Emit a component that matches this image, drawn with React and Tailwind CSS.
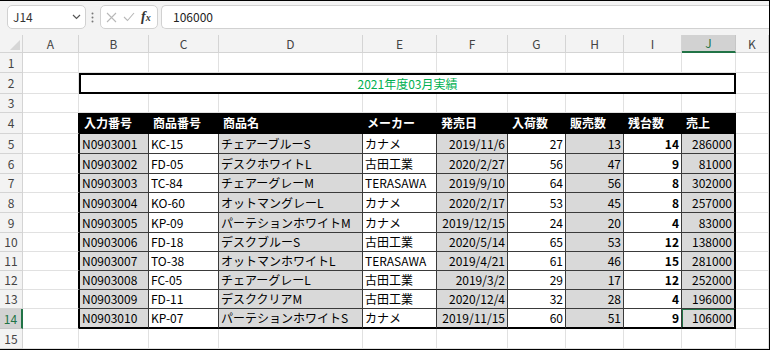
import React from "react";

const colKeys = ["A", "B", "C", "D", "E", "F", "G", "H", "I", "J", "K"];
const colW = ["w-[56px]", "w-[70px]", "w-[70px]", "w-[144px]", "w-[74px]", "w-[71px]", "w-[58px]", "w-[58px]", "w-[58px]", "w-[54px]", "w-[33px]"];
const rowH = ["h-[20px]", "h-[21px]", "h-[19px]", "h-[21px]", "h-[20px]", "h-[20px]", "h-[19px]", "h-[20px]", "h-[20px]", "h-[19px]", "h-[19px]", "h-[19px]", "h-[19px]", "h-[20px]", "h-[20px]"];

const heads = ["入力番号", "商品番号", "商品名", "メーカー", "発売日", "入荷数", "販売数", "残台数", "売上"];

const rows = [
  ["N0903001", "KC-15", "チェアーブルーS", "カナメ", "2019/11/6", "27", "13", "14", "286000"],
  ["N0903002", "FD-05", "デスクホワイトL", "古田工業", "2020/2/27", "56", "47", "9", "81000"],
  ["N0903003", "TC-84", "チェアーグレーM", "TERASAWA", "2019/9/10", "64", "56", "8", "302000"],
  ["N0903004", "KO-60", "オットマングレーL", "カナメ", "2020/2/17", "53", "45", "8", "257000"],
  ["N0903005", "KP-09", "パーテションホワイトM", "カナメ", "2019/12/15", "24", "20", "4", "83000"],
  ["N0903006", "FD-18", "デスクブルーS", "古田工業", "2020/5/14", "65", "53", "12", "138000"],
  ["N0903007", "TO-38", "オットマンホワイトL", "TERASAWA", "2019/4/21", "61", "46", "15", "281000"],
  ["N0903008", "FC-05", "チェアーグレーL", "古田工業", "2019/3/2", "29", "17", "12", "252000"],
  ["N0903009", "FD-11", "デスククリアM", "古田工業", "2020/12/4", "32", "28", "4", "196000"],
  ["N0903010", "KP-07", "パーテションホワイトS", "カナメ", "2019/11/15", "60", "51", "9", "106000"],
];

// B..J fills
const fills = ["bg-[#d9d9d9]", "bg-white", "bg-[#d9d9d9]", "bg-white", "bg-[#d9d9d9]", "bg-white", "bg-[#d9d9d9]", "bg-white", "bg-[#d9d9d9]"];

function RowHead({ n, active }) {
  return (
    <div
      className={
        "w-[23px] shrink-0 h-full flex items-center justify-center border-b " +
        (active
          ? "bg-[#d2d2d2] text-[#217346] border-r-2 border-r-[#217346] border-b-[#c6c6c6]"
          : "bg-[#f3f3f3] text-[#444] border-r border-[#d4d4d4]")
      }
    >
      {n}
    </div>
  );
}

function Blank({ i, extra = "" }) {
  return <div className={colW[i] + " shrink-0 h-full border-r border-b border-[#e1e1e1] bg-white " + extra} />;
}

function FormulaBar() {
  return (
    <div className="h-[34px] bg-[#f3f3f3] flex items-start pt-[4px]">
      <div className="ml-[7px] w-[79px] h-[24px] bg-white border border-[#d1d1d1] rounded-[5px] flex items-center pl-[5px] pr-[4px] text-[#333]">
        <span className="flex-1">J14</span>
        <svg width="9" height="6" viewBox="0 0 9 6">
          <path d="M1 1 L4.5 4.5 L8 1" fill="none" stroke="#555" strokeWidth="1.2" />
        </svg>
      </div>
      <svg className="ml-[5px] mt-[7px]" width="3" height="11" viewBox="0 0 3 11">
        <circle cx="1.5" cy="1.5" r="1" fill="#777" />
        <circle cx="1.5" cy="5.5" r="1" fill="#777" />
        <circle cx="1.5" cy="9.5" r="1" fill="#777" />
      </svg>
      <div className="ml-[6px] w-[58px] h-[24px] bg-white border border-[#d1d1d1] rounded-[5px] flex items-center pl-[5px] gap-[6px]">
        <svg width="11" height="11" viewBox="0 0 11 11">
          <path d="M1 1 L10 10 M10 1 L1 10" stroke="#b8b8b8" strokeWidth="1.1" />
        </svg>
        <svg width="12" height="10" viewBox="0 0 12 10">
          <path d="M1 5 L4.5 8.5 L11 1" fill="none" stroke="#b8b8b8" strokeWidth="1.1" />
        </svg>
        <span className="font-['Liberation_Serif',serif] italic font-bold text-[14px] text-[#333] leading-none">
          f<span className="text-[10px]">x</span>
        </span>
      </div>
      <div className="ml-[3px] flex-1 h-[24px] bg-white border border-[#d1d1d1] rounded-l-[5px] border-r-0 flex items-center pl-[11px] text-[#222]">
        106000
      </div>
    </div>
  );
}

function ColHeader() {
  return (
    <div className="h-[18px] flex bg-[#f3f3f3] text-[#444]">
      <div className="w-[23px] shrink-0 h-full border-r border-b border-[#d4d4d4] relative">
        <svg className="absolute right-[2px] bottom-[2px]" width="10" height="10" viewBox="0 0 10 10">
          <path d="M10 0 L10 10 L0 10 Z" fill="#d6d6d6" />
        </svg>
      </div>
      {colKeys.map((k, i) =>
        k === "J" ? (
          <div key={k} className={colW[i] + " shrink-0 h-full flex items-center justify-center bg-[#d2d2d2] text-[#217346] border-r border-[#c6c6c6] border-b-2 border-b-[#217346]"}>
            {k}
          </div>
        ) : (
          <div key={k} className={colW[i] + " shrink-0 h-full flex items-center justify-center border-r border-b border-[#d4d4d4]"}>
            {k}
          </div>
        )
      )}
    </div>
  );
}

function TableRow({ cells, head, last, active }) {
  return cells.map((c, j) => {
    const i = j + 1;
    let cls = colW[i] + " shrink-0 h-full flex items-center px-[2px] whitespace-nowrap overflow-hidden border-r border-b ";
    if (head) {
      cls += "bg-black text-white font-bold border-black pl-[4px]";
    } else {
      cls += fills[j] + " border-[#3a3a3a] ";
      cls += j >= 4 ? "justify-end " : "";
      cls += j === 7 ? "font-bold " : "";
      if (last) cls += "border-b-2 border-b-black ";
    }
    if (j === 0) cls += " border-l border-l-black";
    if (j === 8) cls += " border-r-2 border-r-black";
    if (active && j === 8) cls += " relative";
    return (
      <div key={j} className={cls}>
        {c}
        {active && j === 8 && (
          <div className="absolute left-[-1px] top-[-1px] right-[-2px] bottom-[-2px] border-2 border-[#217346]">
            <div className="absolute right-[-4px] bottom-[-4px] w-[5px] h-[5px] bg-[#217346] border border-white" />
          </div>
        )}
      </div>
    );
  });
}

export default function App() {
  return (
    <div className="w-[770px] h-[350px] overflow-hidden border-t border-r border-b border-black bg-white font-['Noto_Sans_CJK_JP','Noto_Sans',sans-serif] text-[12px] leading-[16px]">
      <FormulaBar />
      <ColHeader />

      {/* row 1 */}
      <div className={rowH[0] + " flex"}>
        <RowHead n={1} />
        {colKeys.map((k, i) => <Blank key={k} i={i} />)}
      </div>

      {/* row 2 title */}
      <div className={rowH[1] + " flex"}>
        <RowHead n={2} />
        <Blank i={0} />
        <div className="w-[657px] shrink-0 h-full border-2 border-black flex items-center justify-center text-[#00b050]">
          2021年度03月実績
        </div>
        <Blank i={10} />
      </div>

      {/* row 3 */}
      <div className={rowH[2] + " flex"}>
        <RowHead n={3} />
        {colKeys.map((k, i) => <Blank key={k} i={i} />)}
      </div>

      {/* row 4 header */}
      <div className={rowH[3] + " flex"}>
        <RowHead n={4} />
        <Blank i={0} extra="border-r-black" />
        <TableRow cells={heads} head />
        <Blank i={10} />
      </div>

      {rows.map((r, idx) => (
        <div key={idx} className={rowH[4 + idx] + " flex"}>
          <RowHead n={5 + idx} active={idx === 9} />
          <Blank i={0} extra="border-r-black" />
          <TableRow cells={r} last={idx === 9} active={idx === 9} />
          <Blank i={10} />
        </div>
      ))}

      {/* row 15 */}
      <div className={rowH[14] + " flex"}>
        <RowHead n={15} />
        {colKeys.map((k, i) => <Blank key={k} i={i} />)}
      </div>
    </div>
  );
}
